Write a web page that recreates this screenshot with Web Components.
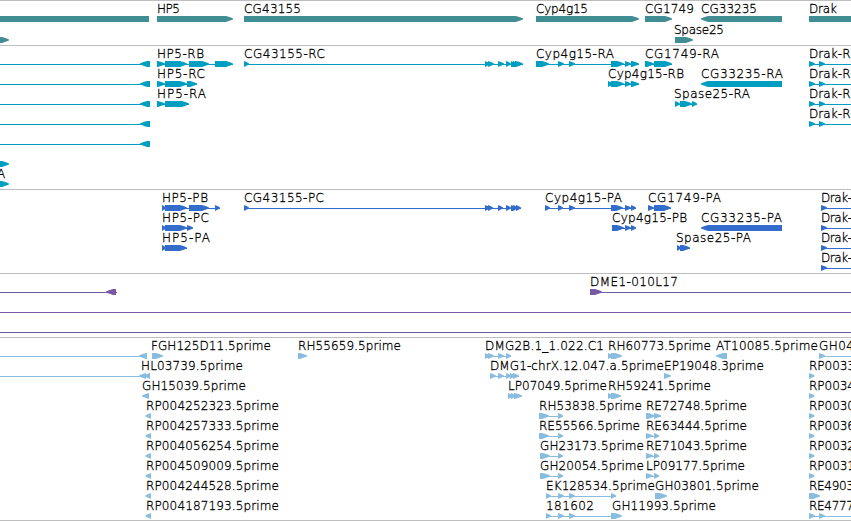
<!DOCTYPE html>
<html lang="en">
<head>
<meta charset="utf-8">
<title>Genome tracks</title>
<style>
    body {
        margin: 0;
        background: #fff;
        overflow: hidden;
    }
</style>
</head>
<body>
<genome-browser></genome-browser>
<script>
// Feature: [label, labelStart, labelEnd, parts, lineStart, lineEnd]
// Part: [start, end], or [start, end, -1] on the reverse strand
const F = (label, x, end, parts, from, to) => ({ label, x, end, parts, from, to });
const END = 860;

const reverseRna = () => F('', 0, 0, [[140, 150, -1]], 0, 145);
const drakRna = () => F('Drak-R', 809, 850.5, [[809, 815], [819, 825]], 809, END);
const drakProtein = () => F('Drak-', 821, 852, [[821, 827]], 821, END);
const rp = name => F(name, 146, 279, [[145.5, 151, -1]]);
const rightRp = name => F(name, 809, 855, [[809, 814.5]]);

const TRACKS = [
    { color: '#408e93', pitch: 21, pad: 0, rows: [
        [
            F('', 0, 0, [[-20, 149, 0]]),
            F('HP5', 157, 180, [[157, 233]]),
            F('CG43155', 244, 301, [[244, 523]]),
            F('Cyp4g15', 536, 588, [[536, 639]]),
            F('CG1749', 645, 694, [[645, 672]]),
            F('CG33235', 701, 757, [[701, 782, -1]]),
            F('Drak', 809, 837, [[809, END]])
        ],
        [
            F('', 0, 0, [[-20, 9]]),
            F('Spase25', 674, 724, [[675, 693]])
        ]
    ] },
    { color: '#009ec0', rows: [
        [
            reverseRna(),
            F('HP5-RB', 157, 204, [[157, 165], [165, 187], [189, 209], [215, 233]], 157, 233),
            F('CG43155-RC', 244, 325, [[244, 249], [485, 490], [488, 494], [498, 504], [506, 511], [511, 516], [513, 518], [515, 523]], 244, 523),
            F('Cyp4g15-RA', 536, 614, [[536, 549], [558, 564], [569, 575], [611, 624], [625, 631], [631, 639]], 536, 639),
            F('CG1749-RA', 645, 719, [[645, 654], [654, 672]], 645, 672),
            drakRna()
        ],
        [
            reverseRna(),
            F('HP5-RC', 157, 205, [[157, 165], [165, 187], [187, 197]], 157, 197),
            F('Cyp4g15-RB', 608, 684, [[608, 613], [611, 624], [625, 631], [631, 639]], 608, 639),
            F('CG33235-RA', 701, 783, [[701, 782, -1]]),
            drakRna()
        ],
        [
            reverseRna(),
            F('HP5-RA', 157, 206, [[157, 165], [165, 189]], 157, 189),
            F('Spase25-RA', 674, 750, [[675, 680], [680, 692], [692, 697]], 675, 697),
            drakRna()
        ],
        [reverseRna(), drakRna()],
        [reverseRna()],
        [F('', 0, 0, [[-20, 9]])],
        [F('A', -3, 6, [[-20, 9]])]
    ] },
    { color: '#326dcb', rows: [
        [
            F('HP5-PB', 162, 208, [[162, 166], [165, 187], [189, 209], [215, 220]], 162, 220),
            F('CG43155-PC', 244, 324, [[244, 249], [485, 490], [488, 493], [498, 503], [506, 511], [511, 516], [513, 518], [516, 521]], 244, 521),
            F('Cyp4g15-PA', 545, 622, [[545, 550], [558, 563], [569, 575], [611, 623], [625, 631], [631, 636]], 545, 636),
            F('CG1749-PA', 648, 721, [[648, 654], [654, 671]], 648, 671),
            drakProtein()
        ],
        [
            F('HP5-PC', 162, 209, [[162, 166], [165, 187], [187, 193]], 162, 193),
            F('Cyp4g15-PB', 612, 687, [[612, 624], [625, 631], [631, 636]], 612, 636),
            F('CG33235-PA', 701, 782, [[701, 782, -1]]),
            drakProtein()
        ],
        [
            F('HP5-PA', 162, 210, [[162, 166], [165, 187]], 162, 187),
            F('Spase25-PA', 676, 751, [[677, 681], [680, 690]], 677, 690),
            drakProtein()
        ],
        [drakProtein()]
    ] },
    { color: '#775aa6', rows: [
        [
            F('', 0, 0, [[106, 116, -1]], 0, 117),
            F('DME1-010L17', 590, 678, [[590, 602]], 590, END)
        ],
        [F('', 0, 0, [], 0, END)],
        [F('', 0, 0, [], 0, END)]
    ] },
    { color: '#89bddf', last: true, rows: [
        [
            F('', 0, 0, [[139, 147, -1]], 0, 145),
            F('FGH125D11.5prime', 151, 271, [[152, 163]]),
            F('RH55659.5prime', 298, 401, [[298, 307]]),
            F('DMG2B.1_1.022.C1', 485, 604, [[485, 490], [488, 494], [498, 504], [506, 511]], 485, 511),
            F('RH60773.5prime', 608, 711, [[608, 613], [611, 622]]),
            F('AT10085.5prime', 716, 818, [[716, 727, -1]]),
            F('GH04', 819, 854, [[819, 825]], 819, END)
        ],
        [
            F('HL03739.5prime', 141, 243, [[139, 146, -1], [144, 150, -1]], 0, 145),
            F('DMG1-chrX.12.047.a.5prime', 490, 664, [[490, 496], [498, 504], [506, 511], [510, 515], [513, 519]], 490, 519),
            F('EP19048.3prime', 664, 764, [[664, 671]]),
            rightRp('RP0033')
        ],
        [
            F('GH15039.5prime', 142, 246, [[142, 149, -1]]),
            F('LP07049.5prime', 508, 607, [[508, 513], [511, 516], [514, 522]], 508, 522),
            F('RH59241.5prime', 608, 711, [[608, 613], [611, 621]]),
            rightRp('RP0034')
        ],
        [
            rp('RP004252323.5prime'),
            F('RH53838.5prime', 539, 642, [[539, 549], [558, 563]], 539, 563),
            F('RE72748.5prime', 646, 747, [[646, 655], [654, 661]], 646, 661),
            rightRp('RP0030')
        ],
        [
            rp('RP004257333.5prime'),
            F('RE55566.5prime', 539, 640, [[539, 549], [558, 563]], 539, 563),
            F('RE63444.5prime', 646, 747, [[646, 653], [654, 659]], 646, 659),
            rightRp('RP0036')
        ],
        [
            rp('RP004056254.5prime'),
            F('GH23173.5prime', 540, 644, [[540, 550], [558, 563]], 540, 563),
            F('RE71043.5prime', 646, 747, [[646, 653], [654, 659]], 646, 659),
            rightRp('RP0032')
        ],
        [
            rp('RP004509009.5prime'),
            F('GH20054.5prime', 540, 644, [[540, 550], [558, 563]], 540, 563),
            F('LP09177.5prime', 646, 745, [[646, 653], [654, 659]], 646, 659),
            rightRp('RP0031')
        ],
        [
            rp('RP004244528.5prime'),
            F('EK128534.5prime', 546, 655, [[546, 551], [558, 564], [569, 575], [611, 616]], 546, 616),
            F('GH03801.5prime', 655, 759, [[655, 667]]),
            F('RE4903', 809, 854, [[809, 820]])
        ],
        [
            rp('RP004187193.5prime'),
            F('181602', 546, 594, [[546, 551], [558, 564], [569, 575]], 546, 612),
            F('GH11993.5prime', 612, 716, [[611, 622]]),
            F('RE4777', 809, 854, [[809, 815], [819, 825]], 809, END)
        ]
    ] }
];

// Blunt-tipped arrow, 6px tall, pointing along the strand
function partPath([start, end, strand = 1]) {
    const head = Math.min(end - start, 7);
    if (strand === 0) {
        return `M${start} 13H${end}V19H${start}Z`;
    }
    const [tail, tip, dir] = strand < 0 ? [end, start, 1] : [start, end, -1];
    const neck = tip + dir * head;
    const mid = tip + dir * head * 0.4;
    return `M${tail} 13H${neck}L${mid} 14.3L${tip} 15.4V16.4L${mid} 17.6L${neck} 19H${tail}Z`;
}

class FeatureRow extends HTMLElement {
    constructor() {
        super();
        this.attachShadow({ mode: 'open' });
    }

    set features(features) {
        this.shadowRoot.innerHTML = `
            <style>
                :host {
                    display: block;
                    height: var(--pitch, 20px);
                }
                svg {
                    display: block;
                    width: 100%;
                    height: 100%;
                    overflow: visible;
                }
                path, rect {
                    fill: var(--track-color);
                }
                rect {
                    shape-rendering: crispEdges;
                }
                text {
                    fill: #000;
                    stroke: #000;
                    stroke-width: 0.3px;
                }
            </style>
            <svg>${features.map(f => this.renderFeature(f)).join('')}</svg>
        `;
    }

    renderFeature(f) {
        const line = f.to ? `<rect x="${f.from}" y="16" width="${f.to - f.from}" height="1"/>` : '';
        const shape = f.parts.length ? `<path fill-rule="nonzero" d="${f.parts.map(partPath).join('')}"/>` : '';
        const label = f.label ? `<text x="${f.x}" y="10" textLength="${f.end - f.x}">${f.label}</text>` : '';
        return line + shape + label;
    }
}

class GenomeTrack extends HTMLElement {
    constructor() {
        super();
        this.attachShadow({ mode: 'open' });
        this.shadowRoot.innerHTML = `
            <style>
                :host {
                    display: flex;
                    flex-direction: column;
                    box-sizing: border-box;
                    border-top: 1px solid #bebebe;
                    padding: 2px 0 1px;
                }
                :host([last]) {
                    padding-bottom: 0;
                    border-bottom: 1px solid #bebebe;
                    height: 184px;
                }
            </style>
            <slot></slot>
        `;
    }
}

class GenomeBrowser extends HTMLElement {
    constructor() {
        super();
        this.attachShadow({ mode: 'open' });
    }

    connectedCallback() {
        this.shadowRoot.innerHTML = `
            <style>
                :host {
                    display: flex;
                    flex-direction: column;
                    width: 851px;
                    height: 521px;
                    overflow: hidden;
                    font: 200 12px "DejaVu Sans", "DejaVu Sans Light", sans-serif;
                }
            </style>
        `;
        TRACKS.forEach(data => {
            const track = document.createElement('genome-track');
            track.style.setProperty('--track-color', data.color);
            track.style.setProperty('--pitch', `${data.pitch || 20}px`);
            if (data.pad === 0) track.style.paddingBottom = '0';
            track.toggleAttribute('last', !!data.last);
            data.rows.forEach(features => {
                const row = document.createElement('feature-row');
                row.features = features;
                track.append(row);
            });
            this.shadowRoot.append(track);
        });
    }
}

customElements.define('feature-row', FeatureRow);
customElements.define('genome-track', GenomeTrack);
customElements.define('genome-browser', GenomeBrowser);
</script>
</body>
</html>
